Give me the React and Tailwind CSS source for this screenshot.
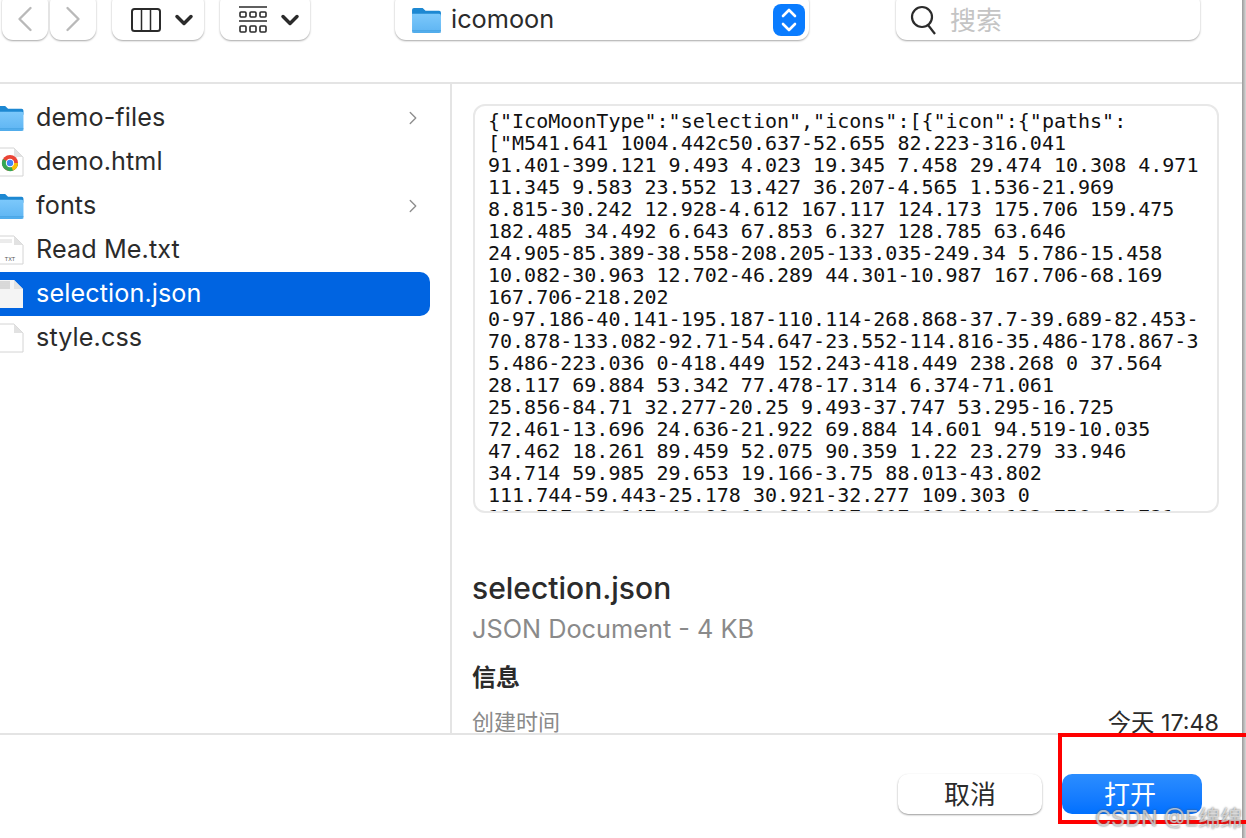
import { ChevronLeft, ChevronRight, ChevronDown, ChevronUp } from "lucide-react";

const codeLines = [
  '{"IcoMoonType":"selection","icons":[{"icon":{"paths":',
  '["M541.641 1004.442c50.637-52.655 82.223-316.041',
  "91.401-399.121 9.493 4.023 19.345 7.458 29.474 10.308 4.971",
  "11.345 9.583 23.552 13.427 36.207-4.565 1.536-21.969",
  "8.815-30.242 12.928-4.612 167.117 124.173 175.706 159.475",
  "182.485 34.492 6.643 67.853 6.327 128.785 63.646",
  "24.905-85.389-38.558-208.205-133.035-249.34 5.786-15.458",
  "10.082-30.963 12.702-46.289 44.301-10.987 167.706-68.169",
  "167.706-218.202",
  "0-97.186-40.141-195.187-110.114-268.868-37.7-39.689-82.453-",
  "70.878-133.082-92.71-54.647-23.552-114.816-35.486-178.867-3",
  "5.486-223.036 0-418.449 152.243-418.449 238.268 0 37.564",
  "28.117 69.884 53.342 77.478-17.314 6.374-71.061",
  "25.856-84.71 32.277-20.25 9.493-37.747 53.295-16.725",
  "72.461-13.696 24.636-21.922 69.884 14.601 94.519-10.035",
  "47.462 18.261 89.459 52.075 90.359 1.22 23.279 33.946",
  "34.714 59.985 29.653 19.166-3.75 88.013-43.802",
  "111.744-59.443-25.178 30.921-32.277 109.303 0",
  "118.797-39.147-49.86-18.624-127.607-13.244-133.756-15.721",
];

const files = [
  { name: "demo-files", icon: "folder", arrow: true },
  { name: "demo.html", icon: "chrome" },
  { name: "fonts", icon: "folder", arrow: true },
  { name: "Read Me.txt", icon: "txt" },
  { name: "selection.json", icon: "json", selected: true },
  { name: "style.css", icon: "blank" },
];

function FolderIcon({ id, className }) {
  return (
    <svg viewBox="0 0 30 28" className={className}>
      <defs>
        <linearGradient id={id} x1="0" y1="0" x2="0" y2="1">
          <stop offset="0" stopColor="#7cc8fb" />
          <stop offset="1" stopColor="#5db4f2" />
        </linearGradient>
      </defs>
      <path d="M2 1h9l3 3h14a2 2 0 0 1 2 2v4H0V3a2 2 0 0 1 2-2z" fill="#1d88d2" />
      <path d="M0 7h28a2 2 0 0 1 2 2v16a2 2 0 0 1-2 2H2a2 2 0 0 1-2-2z" fill={`url(#${id})`} />
      <path d="M0 24.5h30M0 26h30" stroke="#3f9ede" strokeWidth="0.7" />
    </svg>
  );
}

function FileIcon({ type, id }) {
  if (type === "folder") {
    return (
      <div className="w-[36px] flex justify-end pr-[12px]">
        <FolderIcon id={id} className="w-[30px] h-[27px] shrink-0" />
      </div>
    );
  }
  return (
    <div className="w-[36px] flex justify-end pr-[12px]">
      <svg viewBox="0 0 24 30" className="w-[24px] h-[30px] shrink-0 overflow-visible">
        <path
          d="M-4 1h18l9 9v19H-4z"
          fill={type === "json" ? "#f4f4f4" : "#fff"}
          stroke={type === "json" ? "none" : "#d4d4d4"}
          strokeWidth="1"
        />
        <path d="M14 1v9h9z" fill="#e2e2e2" />
        {type === "chrome" && (
          <g>
            <circle cx="10" cy="16" r="8" fill="#ea4335" />
            <path d="M10 16L3 12a8 8 0 0 0 3 11z" fill="#34a853" />
            <path d="M10 16l-4 7a8 8 0 0 0 12-7z" fill="#34a853" />
            <path d="M10 16h8a8 8 0 0 1-5 7.400l-3-7z" fill="#fbbc05" />
            <circle cx="10" cy="16" r="4.200" fill="#fff" />
            <circle cx="10" cy="16" r="3.200" fill="#4285f4" />
          </g>
        )}
        {type === "txt" && (
          <text x="10" y="26" fontSize="5.500" textAnchor="middle" fill="#555" fontFamily="Liberation Sans, sans-serif">
            TXT
          </text>
        )}
        {type === "txt" && <path d="M-4 5h16M-4 7h16" stroke="#d8d8d8" strokeWidth="1" />}
        {type === "json" && <path d="M-4 3h14M-4 5h14M-4 7h14M-4 9h14" stroke="#bdbdbd" strokeWidth="1" />}
      </svg>
    </div>
  );
}

function FileRow({ file }) {
  return (
    <div
      className={`h-[44px] flex items-center rounded-r-[10px] ${
        file.selected ? "bg-[#0064e1] text-white" : "text-[#2b2b2b]"
      }`}
    >
      <FileIcon type={file.icon} id={`list-${file.name.replace(/\W/g, "")}`} />
      <span className="flex-1 -mt-[1px] text-[25.2px] tracking-[0.1px]">{file.name}</span>
      {file.arrow && <ChevronRight className="w-[22px] h-[22px] mr-[6px] text-[#8e8e8e]" strokeWidth={1.5} />}
    </div>
  );
}

function ToolButton({ className, children }) {
  return (
    <div
      className={`h-[48px] flex items-center rounded-[11px] bg-white shadow-[0_1px_2px_rgba(0,0,0,0.35)] ${className}`}
    >
      {children}
    </div>
  );
}

export default function App() {
  return (
    <div className="relative w-[1246px] h-[838px] flex overflow-hidden bg-white font-['Inter','Noto_Sans_CJK_SC',sans-serif]">
      <div className="flex-1 min-w-0 flex flex-col">
        {/* toolbar */}
        <div className="h-[84px] shrink-0 border-b-2 border-[#e4e4e4]">
          <div className="flex -mt-[8px]">
            <ToolButton className="w-[46px] ml-[2px] justify-center">
              <ChevronLeft className="w-[44px] h-[44px] mt-[6px] shrink-0 text-[#b9b9b9]" strokeWidth={1.3} />
            </ToolButton>
            <ToolButton className="w-[46px] ml-[2px] justify-center">
              <ChevronRight className="w-[44px] h-[44px] mt-[6px] shrink-0 text-[#b9b9b9]" strokeWidth={1.3} />
            </ToolButton>
            <ToolButton className="w-[92px] ml-[16px] gap-[9px] pl-[19px] pt-[8px]">
              <svg width="30" height="24" viewBox="0 0 30 24" fill="none" stroke="#2b2b2b" strokeWidth="2">
                <rect x="1" y="1" width="28" height="22" rx="2.500" />
                <path d="M10.500 1v22M19.500 1v22" strokeWidth="1.500" />
              </svg>
              <ChevronDown className="w-[28px] h-[28px] shrink-0 text-[#2b2b2b]" strokeWidth={3} />
            </ToolButton>
            <ToolButton className="w-[90px] ml-[16px] gap-[9px] pl-[19px] pt-[8px]">
              <svg width="28" height="28" viewBox="0 0 28 28" fill="none" stroke="#2b2b2b" strokeWidth="1.600">
                <path d="M0 1h28M0 15h28" />
                <rect x="1" y="6" width="6" height="5" rx="1" />
                <rect x="11" y="6" width="6" height="5" rx="1" />
                <rect x="21" y="6" width="6" height="5" rx="1" />
                <rect x="1" y="20" width="6" height="6" rx="1" />
                <rect x="11" y="20" width="6" height="6" rx="1" />
                <rect x="21" y="20" width="6" height="6" rx="1" />
              </svg>
              <ChevronDown className="w-[28px] h-[28px] shrink-0 text-[#2b2b2b]" strokeWidth={3} />
            </ToolButton>
            <ToolButton className="w-[414px] ml-[85px] pl-[17px] pr-[4px] pt-[8px]">
              <FolderIcon id="path-folder" className="w-[29px] h-[27px] shrink-0" />
              <span className="flex-1 ml-[10px] -mt-[2px] text-[25.3px] text-[#2b2b2b]">icomoon</span>
              <div className="w-[32px] h-[32px] rounded-[8px] bg-[#0a7cff] flex flex-col items-center justify-center text-white">
                <ChevronUp className="w-[24px] h-[24px] -my-[5px] shrink-0" strokeWidth={2.6} />
                <ChevronDown className="w-[24px] h-[24px] -my-[5px] shrink-0" strokeWidth={2.6} />
              </div>
            </ToolButton>
            <ToolButton className="w-[304px] ml-[87px] pl-[14px] pt-[8px]">
              <svg width="28" height="30" viewBox="0 0 28 30" fill="none" stroke="#2b2b2b" strokeWidth="2.200">
                <circle cx="12" cy="12" r="10" />
                <path d="M18 20l7 9" />
              </svg>
              <span className="ml-[12px] text-[26px] text-[#c4c4c4]">搜索</span>
            </ToolButton>
          </div>
        </div>

        {/* browser and preview */}
        <div className="flex-1 min-h-0 flex">
          <div className="w-[452px] shrink-0 border-r-2 border-[#e4e4e4] pt-[12px] pr-[20px]">
            {files.map((file) => (
              <FileRow key={file.name} file={file} />
            ))}
          </div>
          <div className="flex-1 min-w-0 overflow-hidden pt-[20px] pl-[21px] pr-[23px]">
            <div className="h-[409px] rounded-[12px] border-2 border-[#e8e8e8] overflow-hidden pl-[13px] pt-[4px] font-['DejaVu_Sans_Mono',monospace] text-[20px] leading-[22px] text-[#111]">
              {codeLines.map((line, i) => (
                <div key={i} className="whitespace-pre">
                  {line}
                </div>
              ))}
            </div>
            <div className="-ml-[1px]">
              <div className="mt-[56px] text-[30px] leading-[38px] font-medium text-[#2b2b2b]">selection.json</div>
              <div className="mt-[4px] text-[25.3px] leading-[36px] text-[#8a8a8a]">JSON Document - 4 KB</div>
              <div className="mt-[13px] text-[24px] leading-[36px] font-semibold text-[#2b2b2b]">信息</div>
              <div className="mt-[10px] flex justify-between items-center">
                <span className="text-[22px] leading-[30px] text-[#8a8a8a]">创建时间</span>
                <span className="mt-[2px] text-[23.3px] leading-[30px] text-[#2b2b2b]">今天 17:48</span>
              </div>
            </div>
          </div>
        </div>

        {/* footer */}
        <div className="h-[105px] shrink-0 border-t-2 border-[#e4e4e4] flex justify-end gap-[20px] pt-[39px] pr-[40px] relative bg-white">
          <div className="w-[144px] h-[40px] rounded-[10px] bg-white shadow-[0_1px_2px_rgba(0,0,0,0.4)] flex items-center justify-center text-[26px] text-[#2b2b2b]">
            取消
          </div>
          <div className="w-[140px] h-[40px] pr-[4px] rounded-[10px] bg-gradient-to-b from-[#2b8dff] to-[#0070ff] flex items-center justify-center text-[26px] text-white">
            打开
          </div>
        </div>
      </div>

      {/* edge of the window */}
      <div className="w-[4px] shrink-0 bg-gradient-to-r from-[#9a9a9a] to-[#d8d8d8]" />

      {/* annotation over the screenshot */}
      <div className="absolute left-[1058px] top-[733px] w-[200px] h-[91px] border-4 border-[#ff0000]" />
      <div className="absolute left-[1095px] top-[805px] text-[22px] leading-[26px] text-white/60 whitespace-nowrap [text-shadow:0_0_2px_#555]">
        CSDN @E绵绵
      </div>
    </div>
  );
}
